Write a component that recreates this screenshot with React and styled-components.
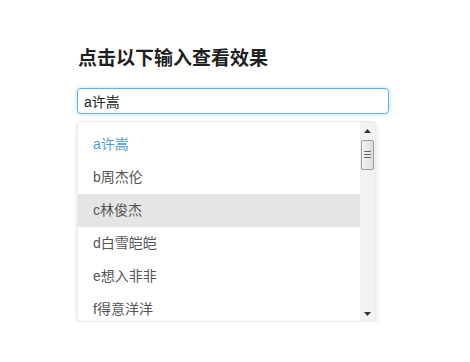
import React, { useState } from 'react';
import styled, { createGlobalStyle } from 'styled-components';

const GlobalStyle = createGlobalStyle`
  html, body {
    margin: 0;
    padding: 0;
    background: #fff;
  }
  body {
    font-family: "Liberation Sans", "Noto Sans CJK SC", sans-serif;
  }
`;

const Page = styled.div`
  /* page wrapper */
  padding: 44px 0 0 77px;
  width: 312px;
`;

const Title = styled.h3`
  margin: 0 0 18px 1px;
  font-size: 19px;
  line-height: 26px;
  font-weight: bold;
  color: #1f1f1f;
  font-family: "Noto Sans CJK SC", sans-serif;
`;

const SearchInput = styled.input`
  /* focused text box */
  box-sizing: border-box;
  display: block;
  width: 312px;
  height: 26px;
  padding: 0 6px;
  border: 1px solid #66afe9;
  border-radius: 4px;
  outline: none;
  box-shadow: 0 0 4px rgba(102, 175, 233, 0.45);
  font-size: 14px;
  color: #222;
  font-family: "Liberation Sans", "Noto Sans CJK SC", sans-serif;
`;

const Dropdown = styled.div`
  /* suggestion list */
  box-sizing: border-box;
  display: flex;
  margin-top: 7px;
  width: 299px;
  height: 201px;
  border: 1px solid #ebebeb;
  border-radius: 3px;
  box-shadow: 0 2px 5px rgba(0, 0, 0, 0.12);
  background: #fff;
  overflow: hidden;
`;

const List = styled.ul`
  flex: 1;
  margin: 0;
  padding: 6px 0 0;
  list-style: none;
  overflow: hidden;
`;

const Item = styled.li`
  height: 33px;
  line-height: 33px;
  padding-left: 15px;
  font-size: 14px;
  color: ${(p) => (p.$match ? '#4b9ed8' : '#555')};
  background: ${(p) => (p.$hover ? '#e5e5e5' : 'transparent')};
  cursor: pointer;
`;

const ScrollBar = styled.div`
  /* classic scrollbar */
  width: 15px;
  display: flex;
  flex-direction: column;
  align-items: center;
  background: #f2f2f2;
`;

const ArrowButton = styled.div`
  height: ${(p) => p.$h}px;
  width: 100%;
  display: flex;
  align-items: center;
  justify-content: center;
`;

const Thumb = styled.div`
  box-sizing: border-box;
  width: 13px;
  height: 30px;
  border: 1px solid #9a9a9a;
  border-radius: 2px;
  background: linear-gradient(to right, #f4f4f4, #dcdcdc);
  display: flex;
  align-items: center;
  justify-content: center;
`;

const Track = styled.div`
  flex: 1;
`;

const names = ['a许嵩', 'b周杰伦', 'c林俊杰', 'd白雪皑皑', 'e想入非非', 'f得意洋洋'];

const App = () => {
  const [value, setValue] = useState('a许嵩');
  const [hover, setHover] = useState(2);

  return (
    <>
      <GlobalStyle />
      <Page>
        <Title>点击以下输入查看效果</Title>
        <SearchInput autoFocus value={value} onChange={(e) => setValue(e.target.value)} />
        <Dropdown>
          <List>
            {names.map((n, i) => (
              <Item
                key={n}
                $match={n === value}
                $hover={i === hover}
                onMouseEnter={() => setHover(i)}
                onClick={() => setValue(n)}
              >
                {n}
              </Item>
            ))}
          </List>
          <ScrollBar>
            <ArrowButton $h={18}>
              <svg width="7" height="4" viewBox="0 0 7 4">
                <path d="M3.5 0 L7 4 L0 4 Z" fill="#333" />
              </svg>
            </ArrowButton>
            <Thumb>
              <svg width="7" height="9" viewBox="0 0 7 9">
                <path d="M0 0.5 H7 M0 3.5 H7 M0 6.5 H7" stroke="#666" strokeWidth="1" />
              </svg>
            </Thumb>
            <Track />
            <ArrowButton $h={15}>
              <svg width="7" height="4" viewBox="0 0 7 4">
                <path d="M0 0 L7 0 L3.5 4 Z" fill="#333" />
              </svg>
            </ArrowButton>
          </ScrollBar>
        </Dropdown>
      </Page>
    </>
  );
};

export default App;
